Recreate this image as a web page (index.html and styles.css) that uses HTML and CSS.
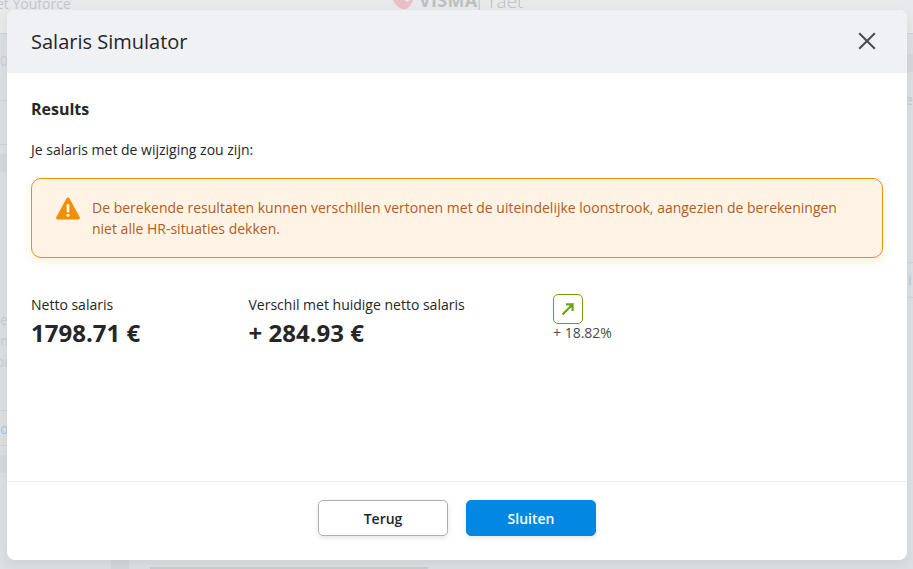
FILE: index.html
```html
<!DOCTYPE html>
<html lang="nl">
<head>
<meta charset="utf-8">
<title>Salaris Simulator</title>
<link rel="stylesheet" href="styles.css">
</head>
<body>
<div class="backdrop" aria-hidden="true">
  <span class="bg-text bg-brand">et Youforce</span>
  <svg class="bg-logo" width="20" height="12" viewBox="0 0 20 12"><path d="M0 0h9l5 4 6-4v3q-3 6-7 8-3 1-6-1Q2 7 0 2z" fill="#ebbfc9"/></svg>
  <span class="bg-text bg-visma">VISMA</span>
  <span class="bg-text bg-raet">| raet</span>
  <span class="bg-line l1"></span><span class="bg-line l2"></span><span class="bg-line l3"></span>
  <span class="bg-line l4"></span><span class="bg-line l5"></span>
  <span class="bg-band b1"></span><span class="bg-band b2"></span>
  <span class="bg-line r1"></span><span class="bg-line r2"></span><span class="bg-line r3"></span>
  <span class="bg-band r4"></span>
  <span class="bg-text t0">0</span><span class="bg-text te">e</span><span class="bg-text tn">n</span><span class="bg-text tr">or</span>
  <span class="bg-text to">o</span><span class="bg-text re">e</span><span class="bg-text ri">i</span>
  <span class="bg-bottom c1"></span><span class="bg-bottom c2"></span>
</div>
<main class="modal">
  <header class="modal-header">
    <h1 class="modal-title">Salaris Simulator</h1>
    <button class="close" type="button" aria-label="Sluiten">
      <svg width="18" height="18" viewBox="0 0 18 18"><path d="M1.200 1.200l15.600 15.600M16.800 1.200L1.200 16.800" fill="none" stroke="#494a4c" stroke-width="2"/></svg>
    </button>
  </header>
  <section class="modal-body">
    <h2 class="section-title">Results</h2>
    <p class="intro">Je salaris met de wijziging zou zijn:</p>
    <div class="alert">
      <svg class="alert-icon" width="24" height="23" viewBox="0 0 24 23"><path d="M12 .5c.7 0 1.200.4 1.600 1l10 18.600c.6 1.200-.1 2.400-1.400 2.400H1.800C.5 22.500-.2 21.300.4 20.100l10-18.600c.4-.6.9-1 1.600-1z" fill="#f18f01"/><rect x="10.700" y="7" width="2.600" height="8.500" rx="1.200" fill="#fff"/><circle cx="12" cy="18.300" r="1.500" fill="#fff"/></svg>
      <p class="alert-text">De berekende resultaten kunnen verschillen vertonen met de uiteindelijke loonstrook, aangezien de berekeningen niet alle HR-situaties dekken.</p>
    </div>
    <div class="results">
      <div class="result result-net">
        <div class="result-label">Netto salaris</div>
        <div class="result-value">1798.71 €</div>
      </div>
      <div class="result result-diff">
        <div class="result-label">Verschil met huidige netto salaris</div>
        <div class="result-value">+ 284.93 €</div>
      </div>
      <div class="trend">
        <span class="trend-box">
          <svg width="14" height="14" viewBox="0 0 14 14"><path d="M1.500 12.500L10.500 3.500M5 2.400h6.600V9" fill="none" stroke="#6aa30f" stroke-width="2.200"/></svg>
        </span>
        <span class="trend-value">+ 18.82%</span>
      </div>
    </div>
  </section>
  <footer class="modal-footer">
    <button class="btn btn-default" type="button">Terug</button>
    <button class="btn btn-primary" type="button">Sluiten</button>
  </footer>
</main>
</body>
</html>
```

FILE: styles.css
```css
* { box-sizing: border-box; }
html, body { height: 100%; }
body {
  margin: 0;
  height: 569px;
  overflow: hidden;
  padding: 10px 6px 9px 7px;
  background: #dde0e3;
  font-family: "Open Sans", sans-serif;
  color: #252626;
  position: relative;
}
.backdrop { position: absolute; inset: 0; overflow: hidden; }
.backdrop::before {
  content: ""; position: absolute; left: 0; right: 0; top: 0; height: 33px; background: #e7e9ea;
}
.bg-text { position: absolute; color: #c9cdd1; font-size: 14px; line-height: 18px; white-space: nowrap; }
.bg-brand { left: -4px; top: -5px; color: #c3c7cb; }
.bg-logo { position: absolute; left: 393px; top: -2px; }
.bg-visma { left: 419px; top: -11px; font-size: 18px; line-height: 22px; font-weight: 700; letter-spacing: .3px; color: #bcc0c4; }
.bg-raet { left: 474px; top: -11px; font-size: 19px; line-height: 24px; font-weight: 300; color: #bcc0c4; }
.bg-line { position: absolute; height: 1px; background: #cfd3d6; }
.l1 { left: 0; width: 7px; top: 33px; }
.l2 { left: 0; width: 7px; top: 100px; }
.l3 { left: 0; width: 7px; top: 144px; }
.l4 { left: 0; width: 7px; top: 410px; }
.l5 { left: 0; width: 7px; top: 445px; }
.r1 { right: 0; width: 6px; top: 33px; }
.r2 { right: 0; width: 6px; top: 262px; }
.r3 { right: 0; width: 6px; top: 297px; }
.bg-band { position: absolute; background: #d5d9dc; }
.b1 { left: 0; width: 7px; top: 154px; height: 18px; }
.b2 { left: 0; width: 7px; top: 455px; height: 18px; }
.r4 { right: 0; width: 6px; top: 54px; height: 18px; }
.t0 { left: 0; top: 52px; }
.te { left: 0; top: 311px; }
.tn { left: 0; top: 332px; }
.tr { left: -4px; top: 353px; }
.to { left: 0; top: 420px; color: #a8c8e4; }
.re { left: 905px; top: 91px; }
.ri { left: 908px; top: 271px; color: #a8c8e4; }
.bg-bottom { position: absolute; background: #d3d7da; }
.c1 { left: 111px; width: 18px; top: 560px; height: 9px; }
.c2 { left: 150px; width: 278px; top: 567px; height: 2px; background: #c9cdd1; }

.modal {
  position: relative;
  height: 550px;
  display: flex;
  flex-direction: column;
  background: #fff;
  border-radius: 8px;
  overflow: hidden;
  box-shadow: 0 4px 12px rgba(37, 38, 38, .08);
}
.modal-header {
  height: 63px;
  flex: none;
  display: flex;
  align-items: center;
  justify-content: space-between;
  padding: 0 31px 2px 24px;
  background: #eff1f5;
}
.modal-title { margin: 2px 0 0; font-size: 20px; line-height: 28px; font-weight: 400; }
.close { display: flex; padding: 0; border: 0; background: none; }
.modal-body { flex: 1; padding: 25px 24px 0; }
.section-title { margin: 0; font-size: 16px; line-height: 22px; font-weight: 700; }
.intro { margin: 19px 0 0; font-size: 14px; line-height: 22px; }
.alert {
  margin-top: 17px;
  height: 80px;
  display: flex;
  align-items: flex-start;
  gap: 12px;
  padding: 18px 24px 0;
  background: #fff3e6;
  border: 1px solid #f18f01;
  border-radius: 10px;
  box-shadow: 0 5px 10px rgba(241, 143, 1, .12);
}
.alert-icon { flex: none; }
.alert-text { margin: 1px 0 0; font-size: 14px; line-height: 20.500px; color: #b35c22; }
.results { display: flex; margin-top: 37px; }
.result-net { width: 217.500px; flex: none; }
.result-diff { width: 304.500px; flex: none; }
.result-label { font-size: 14px; line-height: 20px; }
.result-value { margin-top: 4px; font-size: 24px; line-height: 28px; font-weight: 700; }
.trend { display: flex; flex-direction: column; align-items: flex-start; margin-top: -1px; }
.trend-box {
  width: 30px; height: 30px;
  display: flex; align-items: center; justify-content: center;
  border: 1px solid #6aa30f;
  border-radius: 5px;
  background: #fff;
}
.trend-value { font-size: 14px; line-height: 18px; color: #494a4c; }
.modal-footer {
  flex: none;
  height: 79px;
  display: flex;
  align-items: flex-start;
  justify-content: center;
  gap: 18px;
  padding-top: 18px;
  border-top: 1px solid #ebedef;
}
.btn {
  width: 130px; height: 36px;
  border-radius: 5px;
  font-family: inherit;
  font-size: 14px;
  font-weight: 600;
  box-shadow: 0 2px 5px rgba(37, 38, 38, .12);
}
.btn-default { background: #fff; color: #252626; border: 1px solid #adb0b3; }
.btn-primary { background: #0288e2; color: #fff; border: 1px solid #0288e2; }
```
